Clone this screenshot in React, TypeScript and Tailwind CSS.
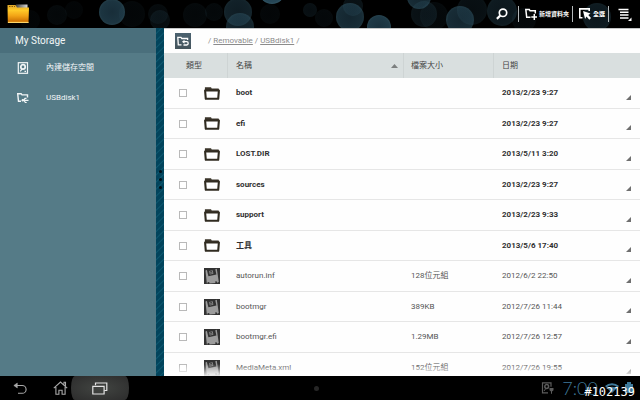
import React from "react";

type Entry = { name: string; size?: string; date: string; folder?: boolean };

const entries: Entry[] = [
  { name: "boot", date: "2013/2/23 9:27", folder: true },
  { name: "efi", date: "2013/2/23 9:27", folder: true },
  { name: "LOST.DIR", date: "2013/5/11 3:20", folder: true },
  { name: "sources", date: "2013/2/23 9:27", folder: true },
  { name: "support", date: "2013/2/23 9:33", folder: true },
  { name: "工具", date: "2013/5/6 17:40", folder: true },
  { name: "autorun.inf", size: "128位元組", date: "2012/6/2 22:50" },
  { name: "bootmgr", size: "389KB", date: "2012/7/26 11:44" },
  { name: "bootmgr.efi", size: "1.29MB", date: "2012/7/26 12:57" },
  { name: "MediaMeta.xml", size: "152位元組", date: "2012/7/26 19:55" },
];

// x, y, radius, opacity of each light spot in the title bar
const spots: [number, number, number, number][] = [
  [30, 20, 10, 0.06], [57, 15, 10, 0.1], [74, 10, 9, 0.06], [112, 12, 13, 0.6], [132, 14, 13, 0.08],
  [158, 14, 10, 0.12], [160, 20, 10, 0.16], [195, 15, 12, 0.1], [214, 12, 9, 0.1],
  [238, 12, 14, 0.38], [240, 27, 14, 0.4], [272, -9, 13, 0.8], [270, 14, 10, 0.08],
  [310, 10, 7, 0.18], [324, 18, 9, 0.1], [350, 17, 14, 0.5], [353, 6, 10, 0.2],
  [379, 27, 12, 0.65], [419, -3, 12, 0.5], [424, 14, 13, 0.2], [434, 16, 14, 0.1],
  [460, 20, 14, 0.5], [472, 10, 15, 0.18], [502, 11, 15, 0.3], [524, 20, 12, 0.1], [597, 17, 14, 0.3],
];

function Bokeh() {
  return (
    <svg className="absolute inset-0 h-full w-full" viewBox="0 0 640 28" preserveAspectRatio="xMinYMin slice" aria-hidden="true">
      <defs>
        <radialGradient id="spot">
          <stop offset="0" stopColor="#284c5f" />
          <stop offset="0.85" stopColor="#2f586c" />
          <stop offset="1" stopColor="#3b6779" />
        </radialGradient>
      </defs>
      {spots.map(([x, y, r, o], i) => (
        <circle key={i} cx={x} cy={y} r={r} fill="url(#spot)" opacity={o} />
      ))}
    </svg>
  );
}

function AppIcon() {
  return (
    <svg className="relative h-5 w-[22px]" viewBox="0 0 22 20" aria-hidden="true">
      <defs>
        <linearGradient id="gold" x1="0" y1="0" x2="0" y2="1">
          <stop offset="0" stopColor="#e0a82a" />
          <stop offset="0.3" stopColor="#ffc928" />
          <stop offset="0.6" stopColor="#f2a416" />
          <stop offset="0.9" stopColor="#cf7404" />
          <stop offset="1" stopColor="#ffc83c" />
        </linearGradient>
        <linearGradient id="paper" x1="0" y1="0" x2="1" y2="0">
          <stop offset="0" stopColor="#444" />
          <stop offset="1" stopColor="#d8d8d8" />
        </linearGradient>
      </defs>
      <path d="M9 .5h11.5v4H9z" fill="url(#paper)" />
      <path d="M.5 1h8l1.500 2.500h12l-.500 15.500H.8z" fill="url(#gold)" />
      <path d="M2 2.500h6" stroke="#8a5a08" strokeDasharray="1.500 1" />
      <path d="M1 18.500h20.500" stroke="#ffe07a" strokeWidth=".8" />
    </svg>
  );
}

function SearchIcon() {
  return (
    <svg className="h-3 w-3" viewBox="0 0 12 12" fill="none" stroke="#fff" aria-hidden="true">
      <circle cx="7" cy="4.800" r="3.700" strokeWidth="1.700" />
      <path d="M4.300 7.500.9 10.900" strokeWidth="2.200" />
    </svg>
  );
}

function NewFolderIcon() {
  return (
    <svg className="h-3 w-3" viewBox="0 0 12 12" fill="none" stroke="#fff" aria-hidden="true">
      <path d="M5.500 9.200H1.700L.8 1.500h3.500l.8 1.300h5.200v2.700" strokeWidth="1.500" />
      <path d="M9.300 6v6M6.300 9h6" strokeWidth="1.500" />
    </svg>
  );
}

function SelectIcon() {
  return (
    <svg className="h-3 w-3" viewBox="0 0 12 12" fill="none" stroke="#fff" aria-hidden="true">
      <path d="M3.500 9.800H.8V.9h9.400V3" strokeWidth="1.600" />
      <path d="m4 3 7.500 2.600-2.200 1.500 2.700 3-1.700 1.600-2.800-3.100-1.400 2.300z" fill="#fff" stroke="none" />
    </svg>
  );
}

function MenuIcon() {
  return (
    <svg className="h-[13px] w-[14px]" viewBox="0 0 14 13" aria-hidden="true">
      <path d="M.5 1.500h10M2 4.300h8.500M2 7.100h8.500M2 9.900h8.500" stroke="#fff" strokeWidth="1.500" />
      <path d="M13.500 9.500V13H10z" fill="#fff" />
    </svg>
  );
}

function DiskIcon() {
  return (
    <svg className="h-3 w-3" viewBox="0 0 12 12" fill="none" stroke="#f2f6f7" aria-hidden="true">
      <rect x="1.300" y=".7" width="9.200" height="10.600" strokeWidth="1.200" />
      <circle cx="6" cy="4.900" r="2.200" strokeWidth="1.700" />
      <path d="M3.200 9.400 5 7.200M7.500 9.300h1.500" strokeWidth="1.200" />
    </svg>
  );
}

function UsbIcon() {
  return (
    <svg className="h-3 w-3" viewBox="0 0 12 12" fill="none" stroke="#f2f6f7" aria-hidden="true">
      <path d="M4 9.300H1.500L.7 1.700h3.400l.9 1.200h5.500v2.600" strokeWidth="1.400" />
      <path d="M5 8.300h6.500M6.500 8.300 8 6.300h1.500M7 8.300l1.300 2.200h1.400" strokeWidth="1.200" />
      <circle cx="5.800" cy="8.300" r="1.200" fill="#f2f6f7" stroke="none" />
    </svg>
  );
}

function UpFolderIcon() {
  return (
    <svg className="h-[11px] w-3" viewBox="0 0 12 11" fill="none" stroke="#fff" aria-hidden="true">
      <path d="M4.500 8.800H1.300L.8 1.300h3.200l.8 1.200h5.800v1.500" strokeWidth="1.300" />
      <path d="M6.500 5.700h3.200q1.500 0 1.500 1.600T9.700 9H6.500" strokeWidth="1.300" />
      <path d="M7.500 3.700v4L5 5.700z" fill="#fff" stroke="none" />
    </svg>
  );
}

function FolderIcon() {
  return (
    <svg className="h-[13px] w-4" viewBox="0 0 16 13" aria-hidden="true">
      <path d="M1.600 3.200V.9h5l.8 1.400h6.700l.3 1" fill="#3a352a" stroke="#3a352a" strokeWidth="1.400" />
      <path d="M1.100 3.500h13.800l-.7 8.300H1.800z" fill="#fff" stroke="#302b20" strokeWidth="2.100" strokeLinejoin="round" />
    </svg>
  );
}

function FileIcon() {
  return (
    <svg className="h-4 w-4" viewBox="0 0 16 16" aria-hidden="true">
      <path d="M0 0h16v16H0z" fill="#323232" />
      <path d="m1.500 2.600 1.400-.5 1.500 6.100 8-1.700-1.100-5.300 1.500-.4 2 13.300-1.700.6-.5-1.400-1.500.3.400 1.300-6 .6-.3-1.500-1.700.3.200.9-.9.200z" fill="#9c9c9c" />
      <path d="m5 3 3.700-.8.700 3.500-3.600.8z" fill="#8a8a8a" />
      <path d="m5.700 3.900 2.300-.5M6.100 5.300l2.300-.5" stroke="#323232" strokeWidth=".8" />
    </svg>
  );
}

function BackIcon() {
  return (
    <svg className="h-[13px] w-[14px]" viewBox="0 0 14 13" fill="none" stroke="#a9a9a9" strokeWidth="1.100" aria-hidden="true">
      <path d="M1.500 3.500h7.700a3.900 3.900 0 0 1 0 7.800H5" />
      <path d="M4.300 1v5L.8 3.500z" fill="#a9a9a9" strokeWidth=".5" />
    </svg>
  );
}

function HomeIcon() {
  return (
    <svg className="h-[14px] w-[15px]" viewBox="0 0 15 14" fill="none" stroke="#a9a9a9" strokeWidth="1.100" aria-hidden="true">
      <path d="M.8 7.200 7.500 1l6.700 6.200M11 3.500V1.300h1.500V5M2.900 6v7.200h3V9.300h3.200v3.900h3V6" />
    </svg>
  );
}

function RecentIcon() {
  return (
    <svg className="h-[13px] w-4" viewBox="0 0 16 13" fill="none" stroke="#e3e3e3" strokeWidth="1.200" aria-hidden="true">
      <path d="M3.500 3.200V1h11.300v7.500h-2.500" />
      <path d="M.8 4.300h11.300v7.700H.8z" />
    </svg>
  );
}

function StorageTrayIcon() {
  return (
    <svg className="h-3 w-[14px]" viewBox="0 0 14 12" fill="none" stroke="#5c5c5c" aria-hidden="true">
      <path d="M7 10.800H1.500V.8h8.500v4" strokeWidth="1.200" />
      <circle cx="5.700" cy="4.500" r="1.900" strokeWidth="1.500" />
      <path d="m3 9 1.800-2.500" strokeWidth="1" />
      <path d="M8.500 6h4v2.300l-1.500 1.200v2.200h-1V9.500L8.500 8.300z" fill="#5c5c5c" stroke="none" />
    </svg>
  );
}

function Separator() {
  return <span className="h-4 w-px bg-[#b5b9bb]" />;
}

export default function App() {
  return (
    <div className="flex h-screen flex-col overflow-hidden bg-black font-['Roboto','Noto_Sans_CJK_TC',sans-serif] text-[8px] leading-3">
      <header className="relative flex h-7 shrink-0 items-center justify-between overflow-hidden pr-2 pl-[7px]">
        <Bokeh />
        <AppIcon />
        <div className="relative flex items-center text-[6px] font-bold text-white">
          <button type="button" aria-label="Search" className="mr-[10px]"><SearchIcon /></button>
          <Separator />
          <button type="button" className="flex items-center gap-[2px] pr-[3px] pl-[6px]"><NewFolderIcon />新增資料夾</button>
          <Separator />
          <button type="button" className="flex items-center gap-[2px] pr-[3px] pl-[6px]"><SelectIcon />全選</button>
          <Separator />
          <button type="button" aria-label="Menu" className="ml-[9px]"><MenuIcon /></button>
        </div>
      </header>

      <div className="flex min-h-0 flex-1">
        <aside className="w-[156px] shrink-0 bg-[#557b87] text-[#f2f6f7]">
          <h1 className="flex h-[25px] items-center bg-[#4a6f7c] pt-px pl-[15px] text-[10px]">My Storage</h1>
          <nav>
            <a href="#internal" className="flex h-[30px] items-center gap-[17px] pl-[17px]"><DiskIcon />內建儲存空間</a>
            <a href="#usb" className="flex h-[30px] items-center gap-[17px] pl-[17px]"><UsbIcon />USBdisk1</a>
          </nav>
        </aside>

        <div className="flex w-2 shrink-0 flex-col items-center gap-[5px] bg-[#02475f] bg-[repeating-linear-gradient(135deg,#02445c_0px,#02445c_3px,#0d5870_4px,#02445c_5px)] pt-[142px]">
          <span className="h-[3px] w-[3px] rounded-full bg-[#001018]" />
          <span className="h-[3px] w-[3px] rounded-full bg-[#001018]" />
          <span className="h-[3px] w-[3px] rounded-full bg-[#001018]" />
        </div>

        <main className="relative min-w-0 flex-1 overflow-hidden bg-[#fefefe]">
          <div className="flex h-[25px] items-center gap-[17px] border-t border-[#c4c6c7] pl-[11px] text-[#8b8b8b]">
            <button type="button" aria-label="Up one folder" className="flex h-4 w-4 items-center justify-center bg-linear-to-b from-[#4b6270] to-[#44545c]"><UpFolderIcon /></button>
            <nav className="flex gap-[2px]">
              <span>/</span><a href="#removable" className="underline">Removable</a>
              <span>/</span><a href="#usbdisk1" className="underline">USBdisk1</a>
              <span>/</span>
            </nav>
          </div>

          <table className="w-full table-fixed border-separate border-spacing-0 text-left">
            <colgroup>
              <col className="w-[63px]" />
              <col />
              <col className="w-[90px]" />
              <col className="w-[147px]" />
            </colgroup>
            <thead className="bg-[#d9dfdf] text-[#444]">
              <tr className="h-[25px]">
                <th className="p-0 pl-[22px] font-normal">類型</th>
                <th className="border-l border-[#ced4d4] p-0 pl-2 font-normal">
                  <button type="button" className="flex w-full items-center justify-between pr-[5px]">
                    名稱
                    <svg className="h-1 w-[7px]" viewBox="0 0 7 4" aria-hidden="true"><path d="M3.500 0 7 4H0z" fill="#7c7f7f" /></svg>
                  </button>
                </th>
                <th className="border-l border-[#ced4d4] p-0 pl-[7px] font-normal">檔案大小</th>
                <th className="border-l border-[#ced4d4] p-0 pl-2 font-normal">日期</th>
              </tr>
            </thead>
            <tbody className="text-[#555]">
              {entries.map((e) => (
                <tr key={e.name} className={e.folder ? "font-bold text-[#303030] odd:h-[31px] even:h-[30px]" : "odd:h-[31px] even:h-[30px]"}>
                  <td className="border-b border-[#e6e6e6] p-0 pl-[15px]">
                    <div className="flex items-center gap-[17px]">
                      <input type="checkbox" aria-label={e.name} className="h-2 w-2 appearance-none border border-[#b9b9b9] bg-white" />
                      {e.folder ? <FolderIcon /> : <FileIcon />}
                    </div>
                  </td>
                  <td className="border-b border-[#e6e6e6] p-0 pl-[9px]">{e.name}</td>
                  <td className="border-b border-[#e6e6e6] p-0 pl-2">{e.size}</td>
                  <td className="border-b border-[#e6e6e6] p-0 pr-[9px] pl-[9px]">
                    <div className="flex items-center justify-between">
                      {e.date}
                      <button type="button" aria-label={`${e.name} options`} className="pt-2">
                        <svg className="h-[5px] w-[5px]" viewBox="0 0 5 5" aria-hidden="true"><path d="M5 0v5H0z" fill="#6f6f6f" /></svg>
                      </button>
                    </div>
                  </td>
                </tr>
              ))}
            </tbody>
          </table>
          <div className="pointer-events-none absolute inset-x-0 bottom-0 h-3 bg-linear-to-b from-white/0 to-white/90" />
        </main>
      </div>

      <footer className="relative flex h-6 shrink-0 items-center bg-black">
        <div className="flex flex-1 items-center">
          <button type="button" aria-label="Back" className="ml-[13px]"><BackIcon /></button>
          <button type="button" aria-label="Home" className="ml-[26px]"><HomeIcon /></button>
          <button type="button" aria-label="Recent apps" className="ml-[3px] flex h-6 w-[58px] items-center justify-center rounded-[8px/24px] bg-radial from-[#424542] to-[#2c2c2c]"><RecentIcon /></button>
        </div>
        <span className="h-[5px] w-[5px] rounded-full bg-[#262626]" />
        <div className="flex flex-1 items-center justify-end gap-[7px] pr-[7px] text-[#3f7a9b]">
          <StorageTrayIcon />
          <span className="font-['Lato',sans-serif] text-[18px] leading-6 font-light">7:00</span>
          <svg className="h-3 w-[28px]" viewBox="0 0 28 12" aria-hidden="true">
            <path d="M0 4a10 10 0 0 1 14 0l-1.500 1.500a8 8 0 0 0-11 0zM2.500 6.500a6.500 6.500 0 0 1 9 0L7 11z" fill="#3f7a9b" />
            <path d="M22 0h4v2h2v9h-8V2h2z" fill="#3f7a9b" />
          </svg>
        </div>
        <span className="absolute right-[5px] bottom-0 font-['DejaVu_Sans_Mono',monospace] text-[12px] leading-4 text-white">#102139</span>
      </footer>
    </div>
  );
}
